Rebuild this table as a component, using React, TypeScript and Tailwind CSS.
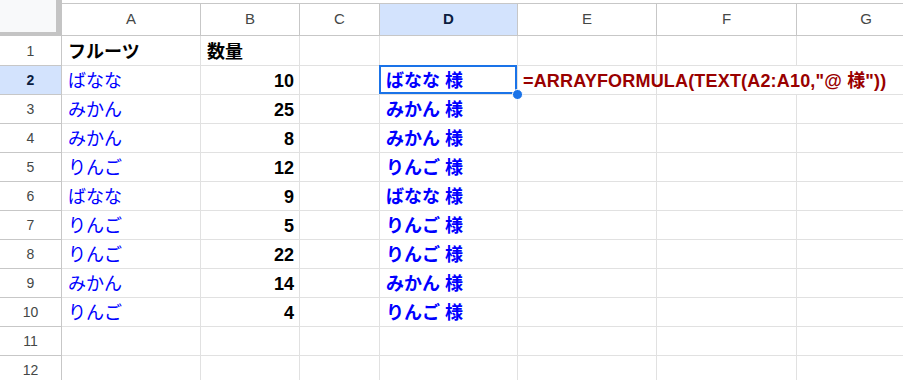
const cols = ["A", "B", "C", "D", "E", "F", "G"];

const rows: { a: string; b: string }[] = [
  { a: "ばなな", b: "10" },
  { a: "みかん", b: "25" },
  { a: "みかん", b: "8" },
  { a: "りんご", b: "12" },
  { a: "ばなな", b: "9" },
  { a: "りんご", b: "5" },
  { a: "りんご", b: "22" },
  { a: "みかん", b: "14" },
  { a: "りんご", b: "4" },
];

const font = "font-['Liberation_Sans','Noto_Sans_CJK_JP',sans-serif]";
const cell = "h-[29px] pt-[3px] border-r border-b border-[#e1e1e1] flex items-center overflow-visible whitespace-nowrap";
const cell1 = "h-[30px] pt-[3px] border-r border-b border-[#e1e1e1] flex items-center whitespace-nowrap";
const rowHead = "h-[29px] pt-px border-r border-b border-[#c7c7c7] flex items-center justify-center text-[14px] text-[#444746]";

const App = () => {
  return (
    <div className={`w-[903px] h-[380px] overflow-hidden bg-white ${font}`}>
      <div className="grid grid-cols-[62px_139px_99px_80px_138px_139px_140px_139px]">
        {/* header row */}
        <div className="h-[36px] bg-[#f8f9fa] border-r-[6px] border-b-4 border-[#c4c4c4]" />
        {cols.map((c) => (
          <div key={c} className="h-[36px] pt-[3px]">
            <div
              className={
                c === "D"
                  ? "h-full border-t border-r border-b border-[#c7c7c7] bg-[#d3e3fd] flex items-center justify-center text-[#0b1d40] text-[15px] font-bold"
                  : "h-full border-t border-r border-b border-[#c7c7c7] flex items-center justify-center text-[#444746] text-[15px]"
              }
            >
              {c}
            </div>
          </div>
        ))}

        {/* row 1 */}
        <div className="h-[30px] pt-[2px] border-r border-b border-[#c7c7c7] flex items-center justify-center text-[14px] text-[#444746]">1</div>
        <div className={`${cell1} pl-[6px] text-[18px] font-bold text-black`}>フルーツ</div>
        <div className={`${cell1} pl-[6px] text-[18px] font-bold text-black`}>数量</div>
        <div className={cell1} />
        <div className={cell1} />
        <div className={cell1} />
        <div className={cell1} />
        <div className={cell1} />

        {rows.map((r, i) => {
          const n = i + 2;
          const sel = n === 2;
          return [
            <div
              key={`h${n}`}
              className={sel ? `${rowHead} bg-[#d3e3fd] font-bold !text-[#0b1d40]` : rowHead}
            >
              {n}
            </div>,
            <div key={`a${n}`} className={`${cell} pl-[6px] text-[18px] text-[#0000ff]`}>
              {r.a}
            </div>,
            <div key={`b${n}`} className={`${cell} justify-end pr-[5px] text-[18px] font-bold text-black`}>
              {r.b}
            </div>,
            <div key={`c${n}`} className={cell} />,
            <div key={`d${n}`} className={`${cell} relative pl-[6px] text-[18px] font-bold text-[#0000ff]`}>
              {r.a} 様
              {sel && (
                <>
                  <div className="absolute -left-px -top-px right-0 bottom-0 border-2 border-[#1a73e8]" />
                  <div className="absolute -right-[6px] -bottom-[6px] w-[11px] h-[11px] rounded-full bg-[#1a73e8] border border-white z-10" />
                </>
              )}
            </div>,
            <div key={`e${n}`} className={`${cell} ${sel ? "pl-[5px] text-[18px] font-bold tracking-[0.18px] text-[#990000] relative z-0" : ""}`}>
              {sel ? '=ARRAYFORMULA(TEXT(A2:A10,"@ 様"))' : null}
            </div>,
            <div key={`f${n}`} className={sel ? "h-[29px] border-b border-[#e1e1e1]" : cell} />,
            <div key={`g${n}`} className={sel ? "h-[29px] border-b border-r border-[#e1e1e1]" : cell} />,
          ];
        })}

        {[11, 12].map((n) => [
          <div key={`h${n}`} className={rowHead}>
            {n}
          </div>,
          ...cols.map((c) => <div key={`${c}${n}`} className={cell} />),
        ])}
      </div>
    </div>
  );
};

export default App;
